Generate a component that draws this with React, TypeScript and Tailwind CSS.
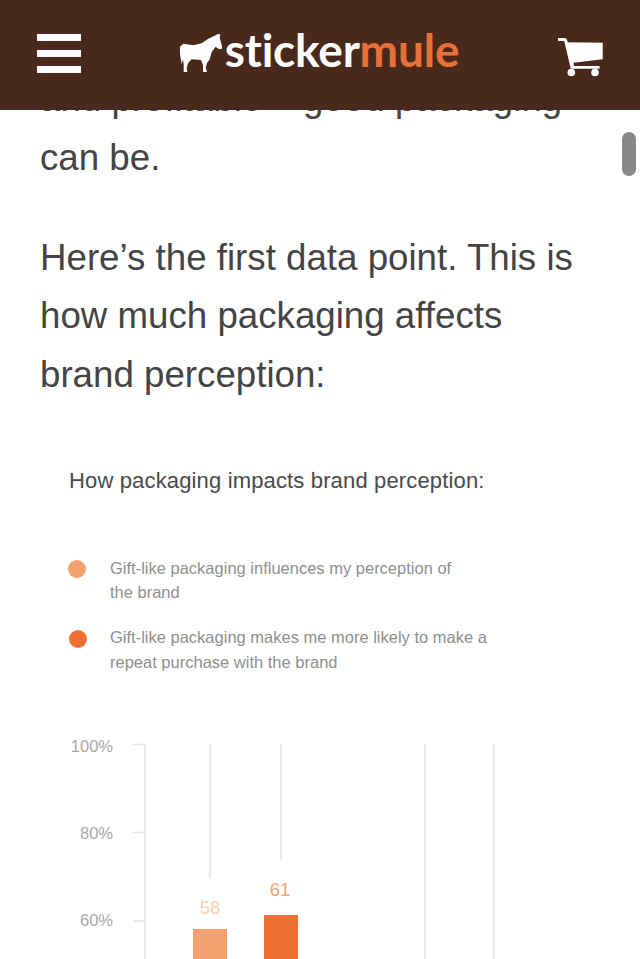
export default function App() {
  return (
    <div className="relative h-[959px] w-[640px] overflow-hidden bg-white font-['Liberation_Sans',sans-serif]">
      <header className="absolute left-0 right-0 top-0 z-10 flex h-[110px] items-center justify-between bg-[#49291b] pl-[37px] pr-[36px]">
        <div className="mt-[-4px] flex w-[44px] flex-col gap-[9px]">
          <span className="h-[7px] bg-white" />
          <span className="h-[7px] bg-white" />
          <span className="h-[7px] bg-white" />
        </div>
        <div className="flex items-center">
          <svg width="43" height="38" viewBox="0 0 43 38" className="mr-[2px] mt-[-4px]">
            <path fill="#fff" d="M37.700 0L40.300.3 39.700 3.700 42 12V14.700L39 15.300 35.700 12.700 31.700 18 29.700 25.300 27 29.300 25.700 33.700 27 38H23V31.300L21 26 11.700 25.300 8.300 28.700 6.700 33.700 7.300 38H3.700V30.300L3 25.300 1.700 30.300 0 20.300V12.700L3.300 9.700 13.300 11.300 21.700 9.300 28.300 4.700 35.700 1.300Z" />
          </svg>
          <div className="mt-[-10px] font-['Lato',sans-serif] text-[46px] font-bold leading-none tracking-[-0.2px]">
            <span className="text-white">sticker</span>
            <span className="text-[#e67137]">mule</span>
          </div>
        </div>
        <svg width="46" height="40" viewBox="0 0 46 40" className="mt-[6px]">
          <path fill="#fff" d="M0 0H6.500Q8.500 0 9 2L9.700 4.300 44.700 4.700V21.300L15.500 24.700 16 28H41.500V30.700H12.800L6.200 3H0Z" />
          <circle cx="13.300" cy="34.500" r="3.800" fill="#fff" />
          <circle cx="37" cy="34.500" r="3.800" fill="#fff" />
        </svg>
      </header>

      <div className="absolute right-[4px] top-[132px] z-10 h-[44px] w-[14px] rounded-full bg-[#888888]" />

      <main className="px-[40px] pt-[70px] text-[36.700px] leading-[58.800px] text-[#444444]">
        <p>
          and profitable – good packaging
          <br />
          can be.
        </p>
        <p className="mt-[41px]">
          Here’s the first data point. This is how much packaging affects brand perception:
        </p>
      </main>

      <section className="pl-[69px] pt-[61px]">
        <h2 className="text-[22px] leading-[30px] tracking-[0.15px] text-[#4a4a4a]">
          How packaging impacts brand perception:
        </h2>
        <div className="mt-[60px] flex flex-col gap-[20.500px] text-[16.500px] leading-[24.500px] text-[#8f8f8f]">
          <div className="flex items-start">
            <span className="ml-[-1px] mt-[4px] h-[18px] w-[18px] shrink-0 rounded-full bg-[#f3a26f]" />
            <p className="ml-[24px] w-[370px]">
              Gift-like packaging influences my perception of
              <br />
              the brand
            </p>
          </div>
          <div className="flex items-start">
            <span className="mt-[5px] h-[18px] w-[18px] shrink-0 rounded-full bg-[#f07033]" />
            <p className="ml-[23px] w-[400px]">
              Gift-like packaging makes me more likely to make a
              <br />
              repeat purchase with the brand
            </p>
          </div>
        </div>
      </section>

      <svg className="absolute left-0 top-[730px]" width="640" height="229" viewBox="0 730 640 229">
        <g stroke="#e2e2e2" strokeWidth="1.500" fill="none">
          <path d="M145 744V959M133 744.500H145M133 832.500H145M133 921H145" />
          <path d="M210 744V878.500M281 744V860M425 744V959M494 744V959" />
        </g>
        <g fontFamily="'Liberation Sans', sans-serif" fontSize="16.500" fill="#a8a8a8" textAnchor="end">
          <text x="113" y="752">100%</text>
          <text x="113" y="839">80%</text>
          <text x="113" y="926">60%</text>
        </g>
        <rect x="193" y="929" width="34" height="30" fill="#f3a26f" />
        <rect x="264" y="915" width="34" height="44" fill="#f07033" />
        <g fontFamily="'Liberation Sans', sans-serif" fontSize="18.500" textAnchor="middle">
          <text x="210" y="914" fill="#fbcfb2">58</text>
          <text x="280" y="896" fill="#f3a26f">61</text>
        </g>
      </svg>
    </div>
  );
}
